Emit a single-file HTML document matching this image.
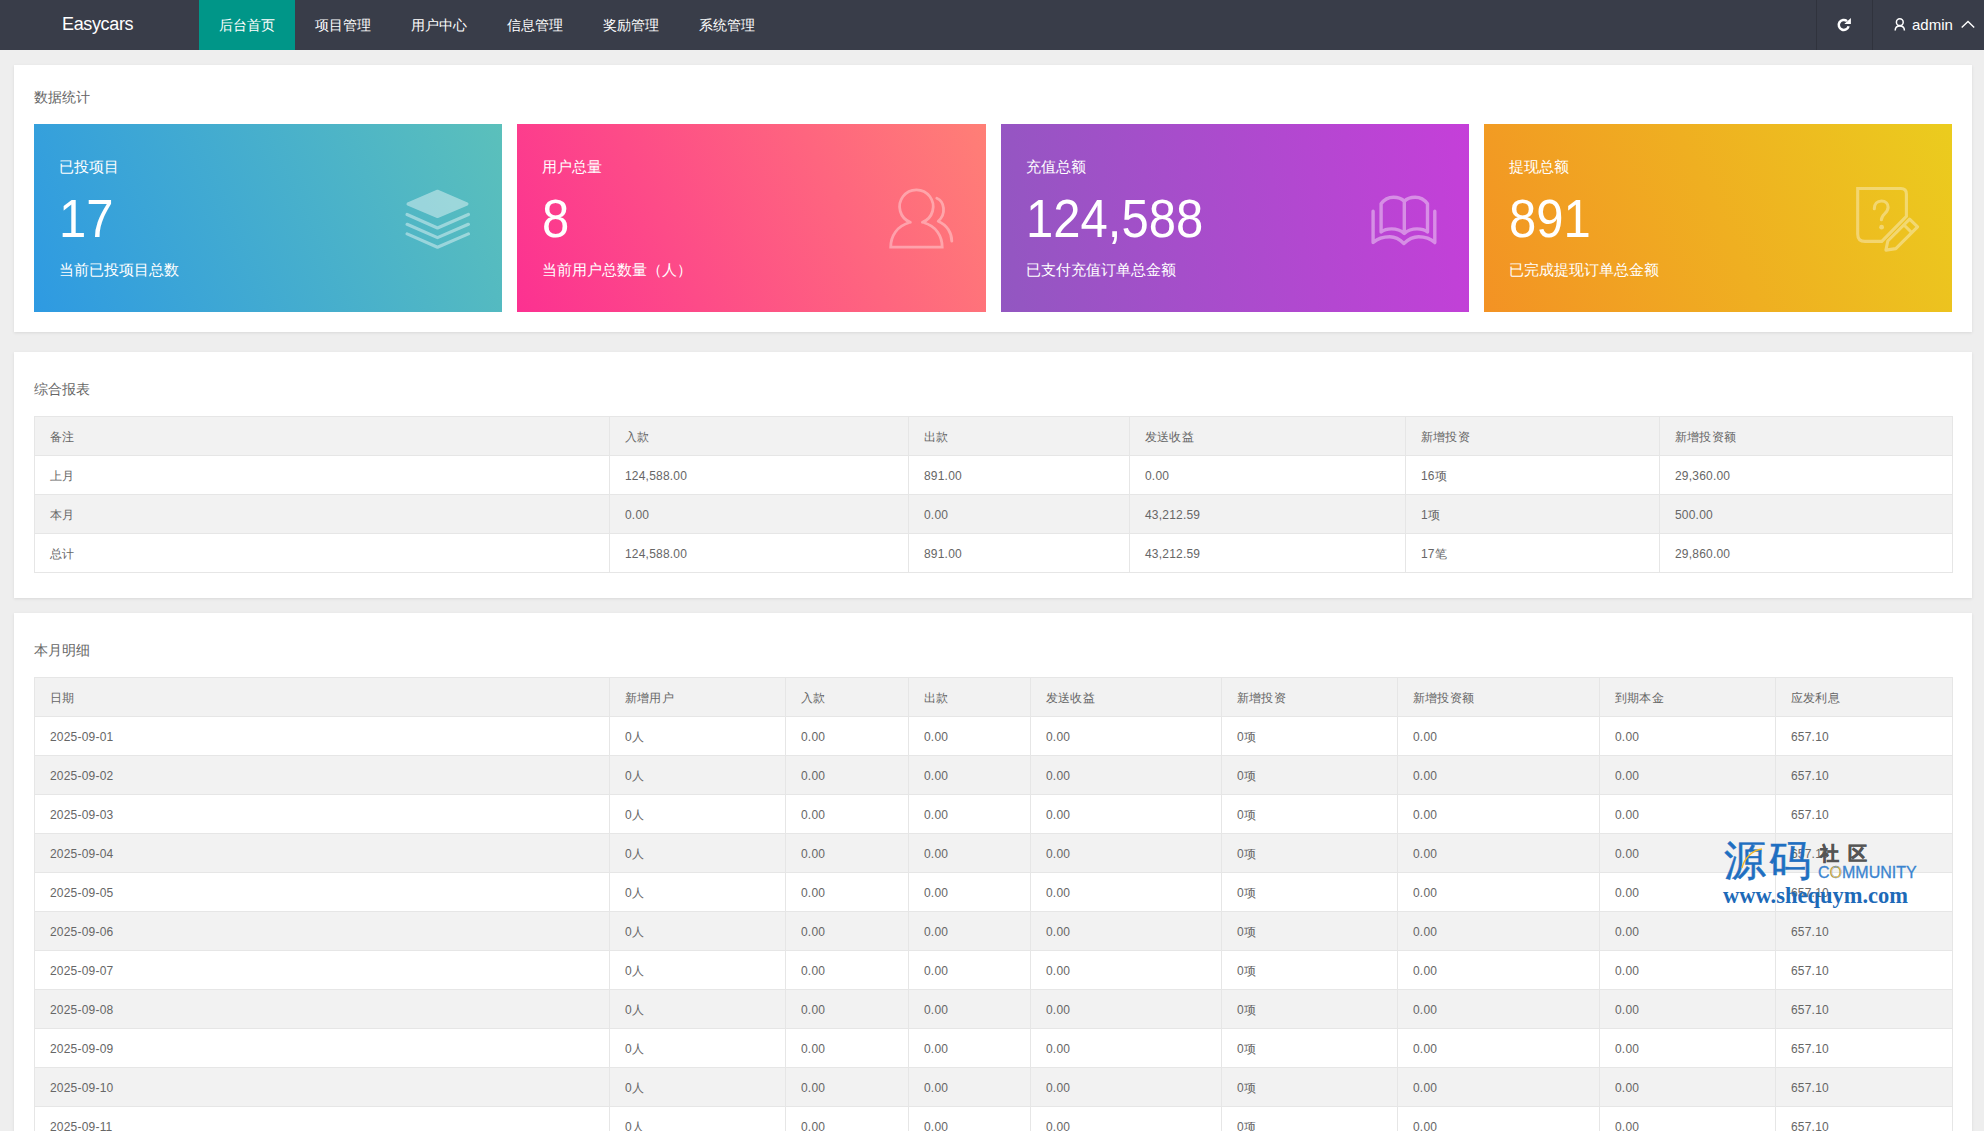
<!DOCTYPE html>
<html><head><meta charset="utf-8">
<style>
*{margin:0;padding:0;box-sizing:border-box}
html,body{width:1984px;height:1131px;overflow:hidden}
body{background:#eeeeee;font-family:"Liberation Sans",sans-serif;color:#666;position:relative}
.hd{position:absolute;left:0;top:0;width:1984px;height:50px;background:#393d49}
.logo{position:absolute;left:62px;top:13px;font-size:18px;line-height:22px;color:#fff;letter-spacing:-0.35px}
.nav{position:absolute;left:199px;top:0;height:50px}
.nav a{position:absolute;top:0;height:50px;width:96px;line-height:50px;padding-left:20px;font-size:14px;color:#fff;text-decoration:none;white-space:nowrap}
.nav a.on{background:#009688}
.vl{position:absolute;top:0;width:1px;height:50px;background:#30333d}
.card{position:absolute;left:14px;width:1958px;background:#fff;box-shadow:0 1px 3px rgba(0,0,0,.09)}
.ct{position:absolute;left:20px;font-size:14px;line-height:20px;color:#666}
.box{position:absolute;top:59px;height:188px;width:468px;color:#fff}
.box .l1{position:absolute;left:25px;top:33px;font-size:15px;line-height:20px}
.box .n{position:absolute;left:24.5px;top:65px;font-size:53px;line-height:60px;transform:scaleX(0.925);transform-origin:0 0;white-space:nowrap}
.box .l2{position:absolute;left:25px;top:136px;font-size:15px;line-height:20px}
.box svg{position:absolute}
table{position:absolute;left:20px;border-collapse:collapse;table-layout:fixed;font-size:12px;color:#666}
td{border:1px solid #e6e6e6;height:39px;padding:2px 15px 0;line-height:20px;letter-spacing:.2px;white-space:nowrap;overflow:hidden}
tr.g td{background:#f2f2f2}
</style></head><body>
<div class="hd">
  <div class="logo">Easycars</div>
  <div class="nav">
    <a class="on" style="left:0">后台首页</a>
    <a style="left:96px">项目管理</a>
    <a style="left:192px">用户中心</a>
    <a style="left:288px">信息管理</a>
    <a style="left:384px">奖励管理</a>
    <a style="left:480px">系统管理</a>
  </div>
  <div class="vl" style="left:1816px"></div>
  <div class="vl" style="left:1872px"></div>
  <svg style="position:absolute;left:1836px;top:17px" width="16" height="16" viewBox="0 0 16 16"><path d="M12.6,9.2 A5,5 0 1 1 11,4.1" fill="none" stroke="#fff" stroke-width="2.5"/><path d="M14.9,1 L14.9,7 L8.3,7 Z" fill="#fff"/></svg>
  <svg style="position:absolute;left:1892px;top:16px" width="16" height="18" viewBox="0 0 16 18"><circle cx="7.8" cy="6.2" r="3.4" fill="none" stroke="#fff" stroke-width="1.5"/><path d="M3.2,14.5 C3.2,11.8 5.2,10.1 7.8,10.1 C10.4,10.1 12.4,11.8 12.4,14.5" fill="none" stroke="#fff" stroke-width="1.5"/></svg>
  <div style="position:absolute;left:1912px;top:16px;font-size:15px;line-height:18px;color:#fff">admin</div>
  <svg style="position:absolute;left:1958px;top:17px" width="20" height="14" viewBox="0 0 20 14"><path d="M3.7,10.5 L10,4.5 L16.2,10.5" fill="none" stroke="#fff" stroke-width="1.4"/></svg>
</div>

<div class="card" style="top:65px;height:267px">
  <div class="ct" style="top:87px;top:22px">数据统计</div>
  <div class="box" style="left:20px;background:linear-gradient(65deg,#2e9ae2,#5bc0bb)">
    <div class="l1">已投项目</div><div class="n">17</div><div class="l2">当前已投项目总数</div>
  </div>
  <div class="box" style="left:503px;width:469px;background:linear-gradient(65deg,#fc3191,#ff7f76)">
    <div class="l1">用户总量</div><div class="n">8</div><div class="l2">当前用户总数量（人）</div>
  </div>
  <div class="box" style="left:987px;background:linear-gradient(80deg,#9257c1,#c53fd9)">
    <div class="l1">充值总额</div><div class="n">124,588</div><div class="l2">已支付充值订单总金额</div>
  </div>
  <div class="box" style="left:1470px;background:linear-gradient(65deg,#f39224,#ebcc1e)">
    <div class="l1">提现总额</div><div class="n">891</div><div class="l2">已完成提现订单总金额</div>
  </div>
</div>

<div class="card" style="top:352px;height:246px">
  <div class="ct" style="top:27px">综合报表</div>
  <table style="top:64px;width:1918px">
    <colgroup><col style="width:575px"><col style="width:299px"><col style="width:221px"><col style="width:276px"><col style="width:254px"><col style="width:293px"></colgroup>
    <tr class="g"><td>备注</td><td>入款</td><td>出款</td><td>发送收益</td><td>新增投资</td><td>新增投资额</td></tr>
    <tr><td>上月</td><td>124,588.00</td><td>891.00</td><td>0.00</td><td>16项</td><td>29,360.00</td></tr>
    <tr class="g"><td>本月</td><td>0.00</td><td>0.00</td><td>43,212.59</td><td>1项</td><td>500.00</td></tr>
    <tr><td>总计</td><td>124,588.00</td><td>891.00</td><td>43,212.59</td><td>17笔</td><td>29,860.00</td></tr>
  </table>
</div>

<div class="card" style="top:613px;height:600px">
  <div class="ct" style="top:27px">本月明细</div>
  <table id="t3" style="top:64px;width:1918px">
    <colgroup><col style="width:575px"><col style="width:176px"><col style="width:123px"><col style="width:122px"><col style="width:191px"><col style="width:176px"><col style="width:202px"><col style="width:176px"><col style="width:177px"></colgroup>
    <tr class="g"><td>日期</td><td>新增用户</td><td>入款</td><td>出款</td><td>发送收益</td><td>新增投资</td><td>新增投资额</td><td>到期本金</td><td>应发利息</td></tr>
    <tr><td>2025-09-01</td><td>0人</td><td>0.00</td><td>0.00</td><td>0.00</td><td>0项</td><td>0.00</td><td>0.00</td><td>657.10</td></tr>
    <tr class="g"><td>2025-09-02</td><td>0人</td><td>0.00</td><td>0.00</td><td>0.00</td><td>0项</td><td>0.00</td><td>0.00</td><td>657.10</td></tr>
    <tr><td>2025-09-03</td><td>0人</td><td>0.00</td><td>0.00</td><td>0.00</td><td>0项</td><td>0.00</td><td>0.00</td><td>657.10</td></tr>
    <tr class="g"><td>2025-09-04</td><td>0人</td><td>0.00</td><td>0.00</td><td>0.00</td><td>0项</td><td>0.00</td><td>0.00</td><td>657.10</td></tr>
    <tr><td>2025-09-05</td><td>0人</td><td>0.00</td><td>0.00</td><td>0.00</td><td>0项</td><td>0.00</td><td>0.00</td><td>657.10</td></tr>
    <tr class="g"><td>2025-09-06</td><td>0人</td><td>0.00</td><td>0.00</td><td>0.00</td><td>0项</td><td>0.00</td><td>0.00</td><td>657.10</td></tr>
    <tr><td>2025-09-07</td><td>0人</td><td>0.00</td><td>0.00</td><td>0.00</td><td>0项</td><td>0.00</td><td>0.00</td><td>657.10</td></tr>
    <tr class="g"><td>2025-09-08</td><td>0人</td><td>0.00</td><td>0.00</td><td>0.00</td><td>0项</td><td>0.00</td><td>0.00</td><td>657.10</td></tr>
    <tr><td>2025-09-09</td><td>0人</td><td>0.00</td><td>0.00</td><td>0.00</td><td>0项</td><td>0.00</td><td>0.00</td><td>657.10</td></tr>
    <tr class="g"><td>2025-09-10</td><td>0人</td><td>0.00</td><td>0.00</td><td>0.00</td><td>0项</td><td>0.00</td><td>0.00</td><td>657.10</td></tr>
    <tr><td>2025-09-11</td><td>0人</td><td>0.00</td><td>0.00</td><td>0.00</td><td>0项</td><td>0.00</td><td>0.00</td><td>657.10</td></tr>
  </table>
</div>
<svg style="position:absolute;left:0;top:0;z-index:5" width="1984" height="1131" viewBox="0 0 1984 1131">
<g fill="none" stroke="#fff" opacity="0.42" stroke-linecap="round" stroke-linejoin="round">
 <path d="M408,204 L437.5,191.2 L467,204 L437.5,216.5 Z" fill="#fff" stroke-width="3"/>
 <path d="M407.1,214.5 L437.5,228 L468.4,214.5 M407.1,224.3 L437.5,237.6 L468.4,224.3 M407.1,233.9 L437.5,247.2 L468.4,233.9" stroke-width="3.2"/>
</g>
<g fill="none" stroke="#fff" opacity="0.36" stroke-width="2.8" stroke-linecap="round" stroke-linejoin="round">
 <path d="M910.4,222.3 A16.8,16.8 0 1 1 922.4,222.3"/>
 <path d="M909.5,222.5 C897,226 890.7,236 890.7,247.2 L942.2,247.2 C942.2,236 936,226 923.5,222.5" stroke-linecap="butt" stroke-linejoin="miter"/>
 <path d="M936.8,198.3 C944.5,201.5 946.5,214 938.2,221.2 C947,225 951.8,233 951.8,241.2"/>
</g>
<g fill="none" stroke="#fff" opacity="0.4" stroke-width="3.4" stroke-linecap="round" stroke-linejoin="round">
 <path d="M1373.1,211.2 L1373.1,242.6 C1378,238.2 1384,236.7 1389.8,236.7 C1396,236.7 1400,239.5 1403.9,243.5 C1408,239.5 1412.5,236.7 1418.6,236.7 C1424.5,236.7 1430,238.2 1434.8,242.6 L1434.8,211.2"/>
 <path d="M1381.1,232 L1381.1,203.8 C1384,199.8 1388.5,197.2 1393.5,197.2 C1398.5,197.2 1402,198.8 1404.3,201.2 C1406.6,198.8 1410.2,197.2 1415.2,197.2 C1420.2,197.2 1424.6,199.8 1427.5,203.8 L1427.5,232 C1424.5,229.6 1421,228.9 1417,228.9 C1412,228.9 1407.5,230.6 1404.3,233.4 C1401.1,230.6 1396.6,228.9 1391.6,228.9 C1387.6,228.9 1384.1,229.6 1381.1,232 M1404.3,201.2 L1404.3,233"/>
</g>
<g fill="none" stroke="#fff" opacity="0.36" stroke-width="3.1" stroke-linejoin="round">
 <path d="M1906.4,216.4 L1906.4,194 Q1906.4,188.5 1900.9,188.5 L1857.7,188.5 L1857.7,234 Q1857.7,241.4 1865,241.4 L1881.8,241.4 Z" stroke-linejoin="miter"/>
 <path d="M1874.3,208.8 C1874.3,204 1877.3,201 1881.4,201 C1885.6,201 1888.1,203.8 1888.1,207.2 C1888.1,213.2 1881.4,214.2 1881.4,219.8" stroke-linecap="round"/>
 <path d="M1887.8,241 L1909.6,219.2 L1917.6,226.9 L1895.8,248.6 L1885.9,250.1 Z M1904,225 L1912,232.8"/>
<circle cx="1881.6" cy="227.2" r="2.4" fill="#fff" stroke="none"/>
</g>
</svg>
<div style="position:absolute;left:1722px;top:834px;z-index:6;width:200px;height:80px">
 <div style="position:absolute;left:2px;top:2px;font-size:42px;line-height:50px;font-weight:normal;-webkit-text-stroke:0.5px #1f6fc1;color:#1f6fc1;letter-spacing:3px">源码</div>
 <svg style="position:absolute;left:0;top:1px" width="60" height="50"><path d="M20,33 C22,24 30,15 40,14" fill="none" stroke="#f3b82a" stroke-width="1.4"/></svg>
 <div style="position:absolute;left:98px;top:9px;font-size:19px;line-height:22px;font-weight:bold;color:#555;-webkit-text-stroke:0.6px #555;letter-spacing:9px">社区</div>
 <div style="position:absolute;left:96px;top:30px;font-size:16px;line-height:18px;color:#3a84d0;-webkit-text-stroke:0.3px #3a84d0">C<span style="color:#f3b82a">O</span>MMUNITY</div>
 <div style="position:absolute;left:1px;top:50px;font-family:'Liberation Serif',serif;font-weight:bold;font-size:22.5px;line-height:24px;color:#1d6ab8">www.shequym.com</div>
</div>
</body></html>
